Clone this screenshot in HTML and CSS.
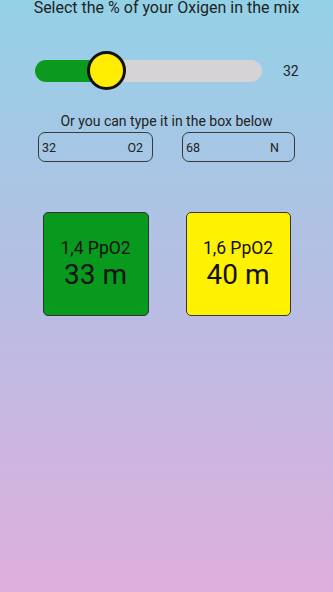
FILE: index.html
```html
<!DOCTYPE html>
<html>
<head>
<meta charset="utf-8">
<link rel="stylesheet" href="styles.css">
</head>
<body>
<div class="screen">
  <div class="title">Select the % of your Oxigen in the mix</div>
  <div class="slider-row">
    <div class="track">
      <div class="fill" style="width: 72px"></div>
      <div class="thumb" style="left: 52px"></div>
    </div>
    <div class="value">32</div>
  </div>
  <div class="subtitle">Or you can type it in the box below</div>
  <div class="inputs">
    <div class="box"><span>32</span><span>O2</span></div>
    <div class="box box-n"><span>68</span><span>N</span></div>
  </div>
  <div class="cards">
    <div class="card green">
      <div class="ppo2">1,4 PpO2</div>
      <div class="depth">33 m</div>
    </div>
    <div class="card yellow">
      <div class="ppo2">1,6 PpO2</div>
      <div class="depth">40 m</div>
    </div>
  </div>
</div>
</body>
</html>
```
FILE: styles.css
```css
html, body {
  margin: 0;
  padding: 0;
}
body {
  width: 333px;
  height: 592px;
  overflow: hidden;
  background: linear-gradient(to bottom, #93d1e7 0%, #b8bde3 50%, #dfafdd 100%);
  font-family: Roboto, "Noto Sans", sans-serif;
  color: #1a1a1a;
}
.screen {
  display: flex;
  flex-direction: column;
  align-items: center;
}
.title {
  margin-top: 0;
  font-size: 16px;
  line-height: 16px;
  color: #222;
  white-space: nowrap;
}
.slider-row {
  align-self: stretch;
  display: flex;
  align-items: center;
  height: 40px;
  margin-top: 35px;
  padding-left: 35px;
}
.track {
  position: relative;
  width: 227px;
  height: 22px;
  border-radius: 11px;
  background: #d5d3d6;
}
.fill {
  height: 22px;
  border-radius: 11px 0 0 11px;
  background: #0b9a1e;
}
.thumb {
  position: absolute;
  top: -9px;
  width: 33px;
  height: 33px;
  border: 3.5px solid #111;
  border-radius: 50%;
  background: #ffec00;
}
.value {
  margin-left: 21px;
  font-size: 14px;
  color: #222;
}
.subtitle {
  margin-top: 22px;
  font-size: 14px;
  line-height: 16px;
  color: #222;
}
.inputs {
  display: flex;
  gap: 29px;
  margin-top: 3px;
}
.box {
  box-sizing: border-box;
  width: 115px;
  height: 30px;
  border: 1.4px solid #3a3a3a;
  border-radius: 7px;
  display: flex;
  justify-content: space-between;
  align-items: center;
  padding: 0 9px 0 3px;
  font-size: 12.5px;
  color: #222;
}
.box-n {
  width: 113px;
  padding-right: 15px;
}
.cards {
  display: flex;
  gap: 37px;
  margin-top: 50px;
}
.card {
  box-sizing: border-box;
  width: 106px;
  height: 104px;
  border: 1px solid #333;
  border-radius: 5px;
  display: flex;
  flex-direction: column;
  align-items: center;
  justify-content: center;
  color: #111;
}
.green { background: #089a1d; }
.yellow { background: #fff200; width: 105px; }
.ppo2 {
  font-size: 17.5px;
  line-height: 20px;
  margin-top: 2px;
}
.depth {
  font-size: 28px;
  line-height: 34px;
}
```
